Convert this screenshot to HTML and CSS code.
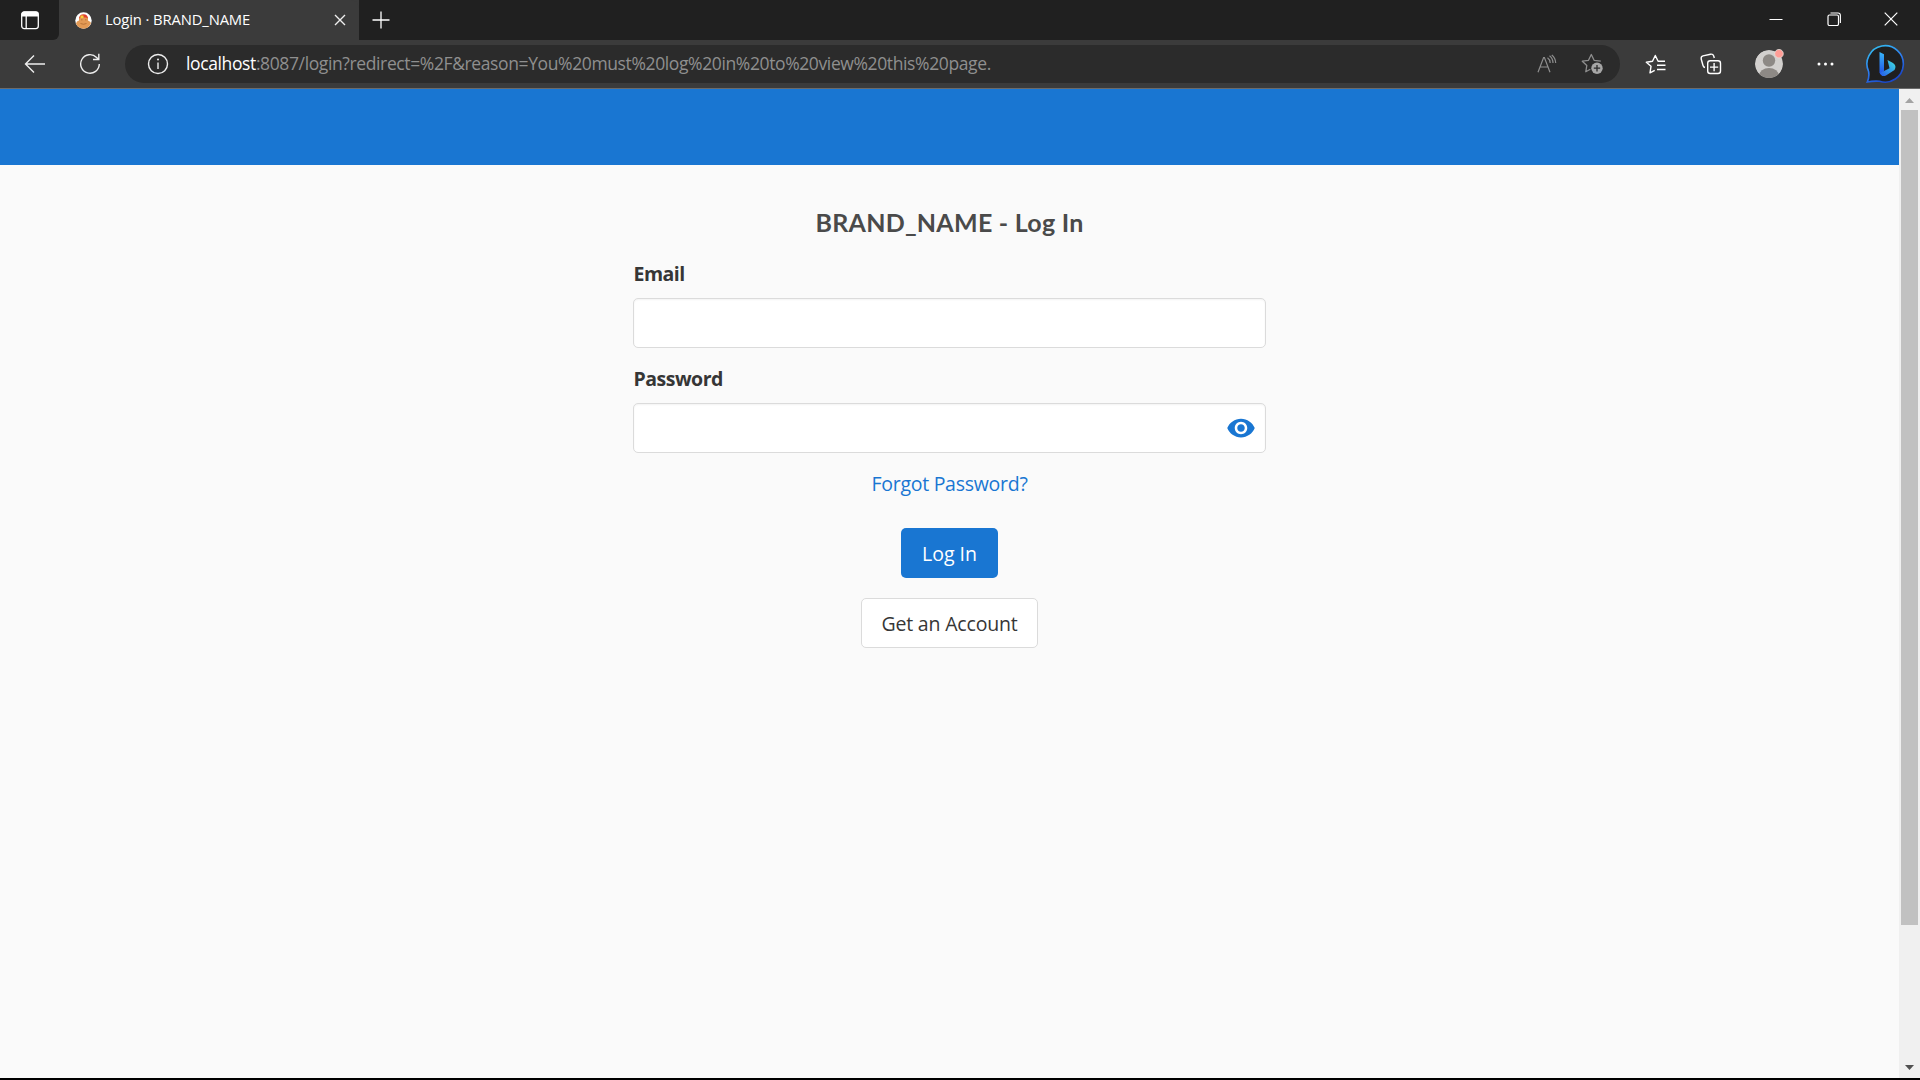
FILE: index.html
```
<!DOCTYPE html>
<html lang="en">
<head>
<meta charset="utf-8">
<title>Login · BRAND_NAME</title>
<link rel="stylesheet" href="styles.css">
</head>
<body>
<div class="window">
  <div class="tabstrip">
    <div class="tab-actions">
      <svg width="20" height="20" viewBox="0 0 20 20"><rect x="1.7" y="2" width="16.6" height="16.6" rx="2.5" fill="none" stroke="#fff" stroke-width="1.3"/><path d="M1.5 6.6V4.5Q1.5 1.5 4.5 1.5h11q3 0 3 3v2.1z" fill="#fff"/><path d="M6.2 6v12.5" stroke="#fff" stroke-width="1.3"/></svg>
    </div>
    <div class="tab">
      <svg width="17" height="17" viewBox="0 0 17 17"><circle cx="8.5" cy="8.5" r="8.2" fill="#fff"/><path d="M1 11.5Q1.500 9 4 8.500V5.500Q8.500 2 13 5.500V8.500Q15.700 9.500 16 11Q14 16.700 8.500 16.700Q3 16.500 1 11.500z" fill="#e39a55"/><path d="M4 6.500Q4.500 2.300 8.500 2.300Q12.500 2.300 13 6.500L11 5.600H6z" fill="#e0402f"/><path d="M5.500 3.500h3v2.500h-3z" fill="#f4d13a"/><path d="M6 7.800h1.500M10 7.800h1.500M5.500 11.500q3 1.500 6 0" stroke="#b06a30" stroke-width=".8" fill="none"/></svg>
      <span class="tab-title">Login · BRAND_NAME</span>
      <svg width="12" height="12" viewBox="0 0 12 12"><path d="M1 1l10 10M11 1L1 11" stroke="#eee" stroke-width="1.4"/></svg>
    </div>
    <svg class="new-tab" width="18" height="18" viewBox="0 0 18 18"><path d="M9 .5v17M.5 9h17" stroke="#fff" stroke-width="1.3"/></svg>
    <div class="window-controls">
      <svg width="14" height="14" viewBox="0 0 14 14"><path d="M.5 7.500h13" stroke="#fff"/></svg>
      <svg width="14" height="14" viewBox="0 0 14 14"><rect x="1" y="3" width="10.500" height="10.500" rx="1.500" fill="none" stroke="#fff" stroke-width="1.200"/><path d="M3.500 1h7.500q2.400 0 2.400 2.400V11" fill="none" stroke="#fff" stroke-width="1.100"/></svg>
      <svg width="14" height="14" viewBox="0 0 14 14"><path d="M.7 .7l12.600 12.600M13.300 .7L.7 13.300" stroke="#fff" stroke-width="1.200"/></svg>
    </div>
  </div>
  <div class="toolbar">
    <svg width="22" height="20" viewBox="0 0 22 20"><path d="M21 10H1.500M10 1.500L1.500 10l8.500 8.500" fill="none" stroke="#eee" stroke-width="1.400"/></svg>
    <svg class="reload" width="22" height="22" viewBox="0 0 22 22"><path d="M20.300 11A9.300 9.300 0 1 1 17.600 4.400L19.500 6.300M19.800 .8V6.500H14" fill="none" stroke="#eee" stroke-width="1.400"/></svg>
    <div class="address">
      <svg width="22" height="22" viewBox="0 0 22 22"><circle cx="11" cy="11" r="9.500" fill="none" stroke="#eee" stroke-width="1.400"/><path d="M11 9.500v6.500" stroke="#eee" stroke-width="1.400"/><circle cx="11" cy="6.500" r="1" fill="#eee"/></svg>
      <span class="url"><span class="host">localhost</span>:8087/login?redirect=%2F&amp;reason=You%20must%20log%20in%20to%20view%20this%20page.</span>
      <svg width="20" height="20" viewBox="0 0 20 20"><path d="M1 18.300L6.600 3.500h.8L13 18.300M3 13h8M10.500 3.800q2.600 1.700 2.700 5.200M12.500 1.800q3.300 2.400 3.500 7.200M14.800 1q3.700 3 3.900 8" fill="none" stroke="#8e8e8e" stroke-width="1.200"/></svg>
      <svg class="fav-add" width="23" height="23" viewBox="0 0 23 23"><path d="M9.300 17.300L4.800 19.700 5.800 13.500 1.300 9.200 7.500 8.300 10.300 2.500 13.100 8.300 19.800 9.200" fill="none" stroke="#8e8e8e" stroke-width="1.300" stroke-linejoin="round"/><circle cx="16" cy="16.200" r="5.700" fill="#a6a6a6"/><path d="M16 13v6.400M12.800 16.200h6.400" stroke="#2b2b2b" stroke-width="1.300"/></svg>
    </div>
    <svg class="favorites" width="22" height="22" viewBox="0 0 22 22"><path d="M9.700 17.300L5 19.800 6 13.300 1.300 9.200 7.500 8.300 10.300 2.500 13.100 8.300H20M12 12.300h8.500M12 16.500h8.500" fill="none" stroke="#fff" stroke-width="1.400" stroke-linejoin="round"/></svg>
    <svg class="collections" width="22" height="22" viewBox="0 0 22 22"><rect x="7.700" y="7.700" width="12.800" height="12.800" rx="2.500" fill="none" stroke="#fff" stroke-width="1.400"/><path d="M14.100 10v8.200M10 14.100h8.200M5 14.500Q3.500 14.200 3 12.500L1.200 6Q.8 3.500 3 2.900L10.500 1.200Q13 .8 13.700 3L14.300 5" fill="none" stroke="#fff" stroke-width="1.400"/></svg>
    <svg class="profile" width="30" height="30" viewBox="0 0 30 30"><defs><clipPath id="avatar"><circle cx="14" cy="15" r="14"/></clipPath></defs><g clip-path="url(#avatar)"><circle cx="14" cy="15" r="14" fill="#d2d0ce"/><circle cx="14" cy="11.500" r="6.200" fill="#8d8985"/><ellipse cx="14" cy="27" rx="10" ry="8" fill="#8d8985"/></g><circle cx="24" cy="4.700" r="4.300" fill="#ff9d96" stroke="#e7ddd9" stroke-width=".8"/></svg>
    <svg class="more" width="17" height="4" viewBox="0 0 17 4"><circle cx="2" cy="2" r="1.500" fill="#fff"/><circle cx="8.500" cy="2" r="1.500" fill="#fff"/><circle cx="15" cy="2" r="1.500" fill="#fff"/></svg>
    <svg class="bing" width="40" height="40" viewBox="0 0 40 40"><defs><linearGradient id="ring" x1="0" y1="0" x2=".5" y2="1"><stop offset="0" stop-color="#35c8f0"/><stop offset=".6" stop-color="#2d7cf0"/><stop offset="1" stop-color="#1b48c8"/></linearGradient><linearGradient id="stem" x1="0" y1="0" x2="0" y2="1"><stop offset="0" stop-color="#38b6f8"/><stop offset="1" stop-color="#2050e8"/></linearGradient><linearGradient id="bowl" x1="0" y1="1" x2="1" y2="0"><stop offset="0" stop-color="#2558ec"/><stop offset="1" stop-color="#3fe0e0"/></linearGradient></defs><path d="M2.300 38Q4.600 33 3.600 27.500A18.200 18.200 0 1 1 14.500 37.200Q8 36.800 2.300 38z" fill="#1f1f1f" stroke="url(#ring)" stroke-width="1.600"/><path d="M14.500 8L19 10.300V27L15.500 30.500 14.500 28.500z" fill="url(#stem)"/><path d="M15 29L24.500 24.300 22.500 16 28 19Q32 21.500 29.500 26L21 31.500Q16.500 33.500 15 29z" fill="url(#bowl)"/></svg>
  </div>
  <div class="viewport">
    <div class="page">
      <header class="site-header"></header>
      <main class="login">
        <h1>BRAND_NAME - Log In</h1>
        <label>Email</label>
        <div class="field"></div>
        <label class="password">Password</label>
        <div class="field"><svg width="30" height="30" viewBox="0 0 24 24"><path fill="#1976d2" d="M12 4.500C7 4.500 2.730 7.610 1 12c1.730 4.390 6 7.500 11 7.500s9.270-3.110 11-7.500c-1.730-4.390-6-7.500-11-7.500zM12 17c-2.760 0-5-2.240-5-5s2.240-5 5-5 5 2.240 5 5-2.240 5-5 5zm0-8c-1.660 0-3 1.340-3 3s1.340 3 3 3 3-1.340 3-3-1.340-3-3-3z"/></svg></div>
        <a class="forgot">Forgot Password?</a>
        <a class="button primary">Log In</a>
        <a class="button secondary">Get an Account</a>
      </main>
    </div>
    <div class="scrollbar">
      <svg width="9" height="5" viewBox="0 0 9 5"><path d="M0 5L4.500 0 9 5z" fill="#a3a3a3"/></svg>
      <div class="thumb"></div>
      <svg width="9" height="5" viewBox="0 0 9 5"><path d="M0 0L4.500 5 9 0z" fill="#505050"/></svg>
    </div>
  </div>
</div>
</body>
</html>
```
FILE: styles.css
```
* { box-sizing: border-box; }
body { margin: 0; font-family: "Open Sans", "Noto Sans", sans-serif; background: #000; }
svg { display: block; flex: none; }
.window { display: flex; flex-direction: column; width: 1920px; height: 1080px; padding-bottom: 2px; overflow: hidden; }
.tabstrip { display: flex; height: 40px; background: #3b3b3b linear-gradient(#202020, #202020) 100% 0 / 1561px 40px no-repeat; }
.tab-actions { display: flex; width: 59px; padding: 10px 0 0 20px; background: #202020; border-bottom-right-radius: 6px; }
.tab { display: flex; align-items: center; width: 300px; padding: 0 13px 0 16px; background: #3b3b3b; border-radius: 0 8px 0 0; color: #fff; }
.tab-title { flex: 1; margin-left: 13px; padding-bottom: 2px; font-size: 14.8px; line-height: 20px; letter-spacing: -.13px; white-space: nowrap; }
.new-tab { margin: 11px 0 0 13px; }
.window-controls { display: flex; gap: 43.500px; margin: 12px 22px 0 auto; }
.toolbar { display: flex; align-items: center; height: 49px; padding: 0 15px 1px 24px; background: #3b3b3b; border-bottom: 1px solid #6b6b6b; }
.reload { margin-left: 33px; }
.address { display: flex; align-items: center; width: 1495px; height: 38px; margin-left: 24px; padding: 0 16px 0 21.500px; border-radius: 19px; background: #2b2b2b; }
.url { flex: 1; margin-left: 17.500px; padding-bottom: 1px; font-size: 17.5px; line-height: 24px; letter-spacing: -.38px; color: #8f8f8f; white-space: nowrap; }
.host { color: #fff; }
.fav-add { margin-left: 24px; }
.favorites { margin-left: 24.500px; }
.collections { margin-left: 33px; }
.profile { margin-left: 33px; }
.more { margin-left: 32.500px; }
.bing { margin-left: auto; }
.viewport { display: flex; flex: 1; min-height: 0; }
.page { flex: 1; background: #fafafa; }
.site-header { height: 76px; background: #1976d2; }
.login { display: flex; flex-direction: column; width: 633px; margin: 0 auto; padding-top: 39px; font-size: 19.5px; line-height: 30px; color: #363636; }
h1 { margin: 0 0 1px; font: 700 25px/36px Lato, sans-serif; letter-spacing: .26px; text-align: center; color: #4a4a4a; }
label { margin-top: 18px; font-weight: 700; letter-spacing: -.5px; text-indent: .5px; }
label.password { margin-top: 16px; }
.field { display: flex; align-items: center; justify-content: flex-end; height: 50px; margin-top: 9px; padding-right: 9px; background: #fff; border: 1px solid #dbdbdb; border-radius: 5px; box-shadow: inset 0 1px 2px rgba(10, 10, 10, .05); }
.forgot { margin-top: 16px; align-self: center; letter-spacing: -.27px; color: #1976d2; }
.button { display: flex; align-items: center; justify-content: center; align-self: center; height: 50px; padding-top: 1px; border-radius: 5px; }
.primary { width: 97px; margin-top: 29px; color: #fff; background: #1976d2; }
.secondary { width: 177px; margin-top: 20px; letter-spacing: -.18px; background: #fff; border: 1px solid #dbdbdb; }
.scrollbar { display: flex; flex-direction: column; align-items: center; width: 21px; padding: 9px 0 8px; background: #f0f0f0; }
.thumb { width: 17px; height: 815px; margin: 7px 0 auto; background: #c1c1c1; }
```
